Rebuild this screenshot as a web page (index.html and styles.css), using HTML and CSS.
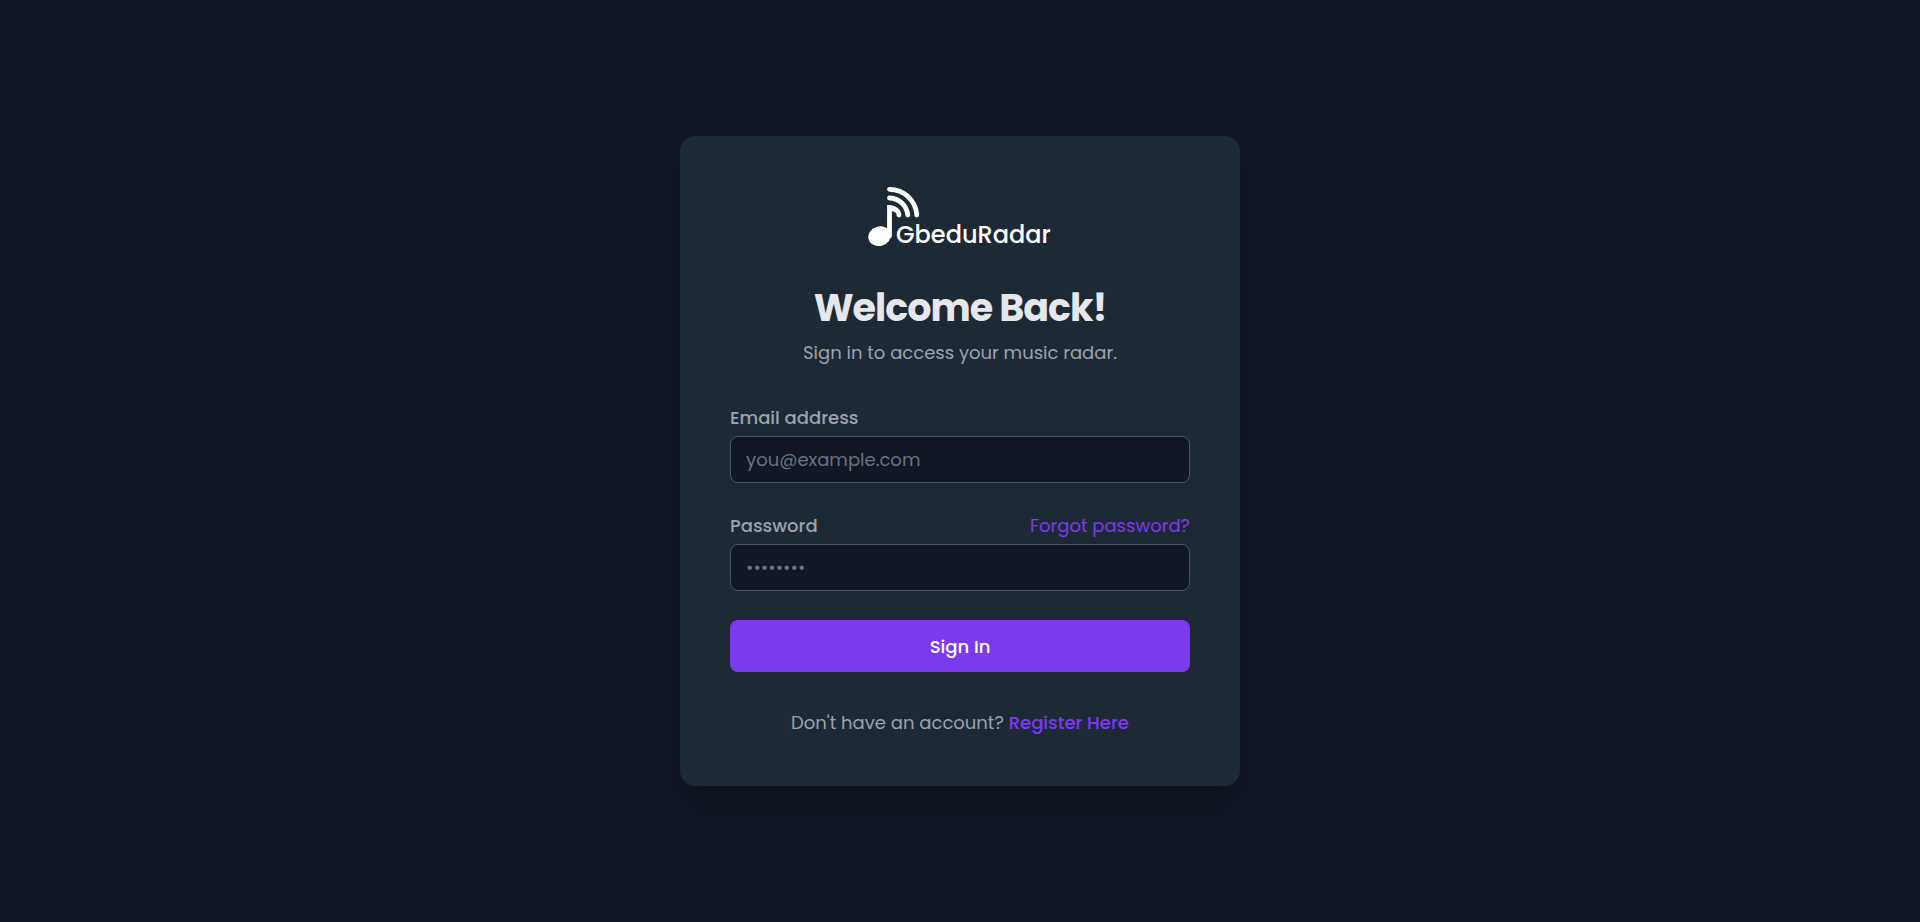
FILE: index.html
```html
<!DOCTYPE html>
<html lang="en">
<head>
    <meta charset="UTF-8">
    <meta name="viewport" content="width=device-width, initial-scale=1.0">
    <title>Sign In - GbeduRadar</title>
    <link rel="stylesheet" href="styles.css">
</head>
<body>
    <main class="login-card">
        <svg class="logo" width="184" height="64" viewBox="0 0 184 64" role="img" aria-label="GbeduRadar">
            <g fill="none" stroke="currentColor" stroke-width="4.8" stroke-linecap="round">
                <path d="M21.5 3.3A27.5 27.5 0 0 1 48.8 29"/>
                <path d="M21.5 12A19 19 0 0 1 39.8 29"/>
                <path d="M21.5 50V21.5C26.5 21.5 30.5 24.5 31 29"/>
            </g>
            <path d="M19.5 20H24.5L30 27.5L24 25Z" fill="currentColor"/>
            <ellipse cx="11.5" cy="50.2" rx="11.3" ry="9.8" transform="rotate(-14 11.5 50.2)" fill="currentColor"/>
            <text class="logo-text" x="28" y="57">GbeduRadar</text>
        </svg>
        <h1>Welcome Back!</h1>
        <p class="subtitle">Sign in to access your music radar.</p>
        <form class="login-form">
            <div class="form-group">
                <label for="email">Email address</label>
                <input type="email" id="email" placeholder="you@example.com" required>
            </div>
            <div class="form-group">
                <div class="label-row">
                    <label for="password">Password</label>
                    <a href="#">Forgot password?</a>
                </div>
                <input type="password" id="password" placeholder="••••••••" required>
            </div>
            <button type="submit">Sign In</button>
        </form>
        <p class="register">Don't have an account? <a href="#">Register Here</a></p>
    </main>
</body>
</html>
```

FILE: styles.css
```css
* {
    box-sizing: border-box;
}
body {
    font-family: Poppins, Inter, sans-serif;
    font-size: 18px;
    line-height: 27px;
    background-color: #111725;
    color: #9ca3af;
    margin: 0;
    min-height: 100vh;
    display: flex;
    align-items: center;
    justify-content: center;
}
.login-card {
    width: 100%;
    max-width: 560px;
    padding: 50px;
    background-color: #1e2936;
    border-radius: 15px;
    box-shadow: 0 20px 40px rgba(0, 0, 0, 0.2);
    text-align: center;
}
.logo {
    display: block;
    margin: 0 auto 34px;
    color: #fff;
}
.logo-text {
    font-size: 24px;
    font-weight: 500;
    fill: currentColor;
}
h1 {
    margin: 0 0 7px;
    font-size: 38px;
    line-height: 48px;
    font-weight: 700;
    letter-spacing: -1px;
    color: #e5e7eb;
}
p {
    margin: 0;
}
a {
    color: #7c3aed;
    text-decoration: none;
}
.login-form {
    display: flex;
    flex-direction: column;
    gap: 29px;
    margin: 38px 0 37px;
    text-align: left;
}
.form-group {
    display: flex;
    flex-direction: column;
    gap: 5px;
}
.label-row {
    display: flex;
    justify-content: space-between;
}
label {
    font-weight: 500;
}
input {
    width: 100%;
    height: 47px;
    padding: 0 15px;
    font: inherit;
    color: #e5e7eb;
    background-color: #111725;
    border: 1px solid #4b5563;
    border-radius: 8px;
}
input::placeholder {
    color: #6b7280;
}
button {
    height: 52px;
    font: inherit;
    font-weight: 500;
    color: #fff;
    background-color: #7c3aed;
    border: none;
    border-radius: 8px;
    cursor: pointer;
}
.register a {
    font-weight: 500;
}
```
